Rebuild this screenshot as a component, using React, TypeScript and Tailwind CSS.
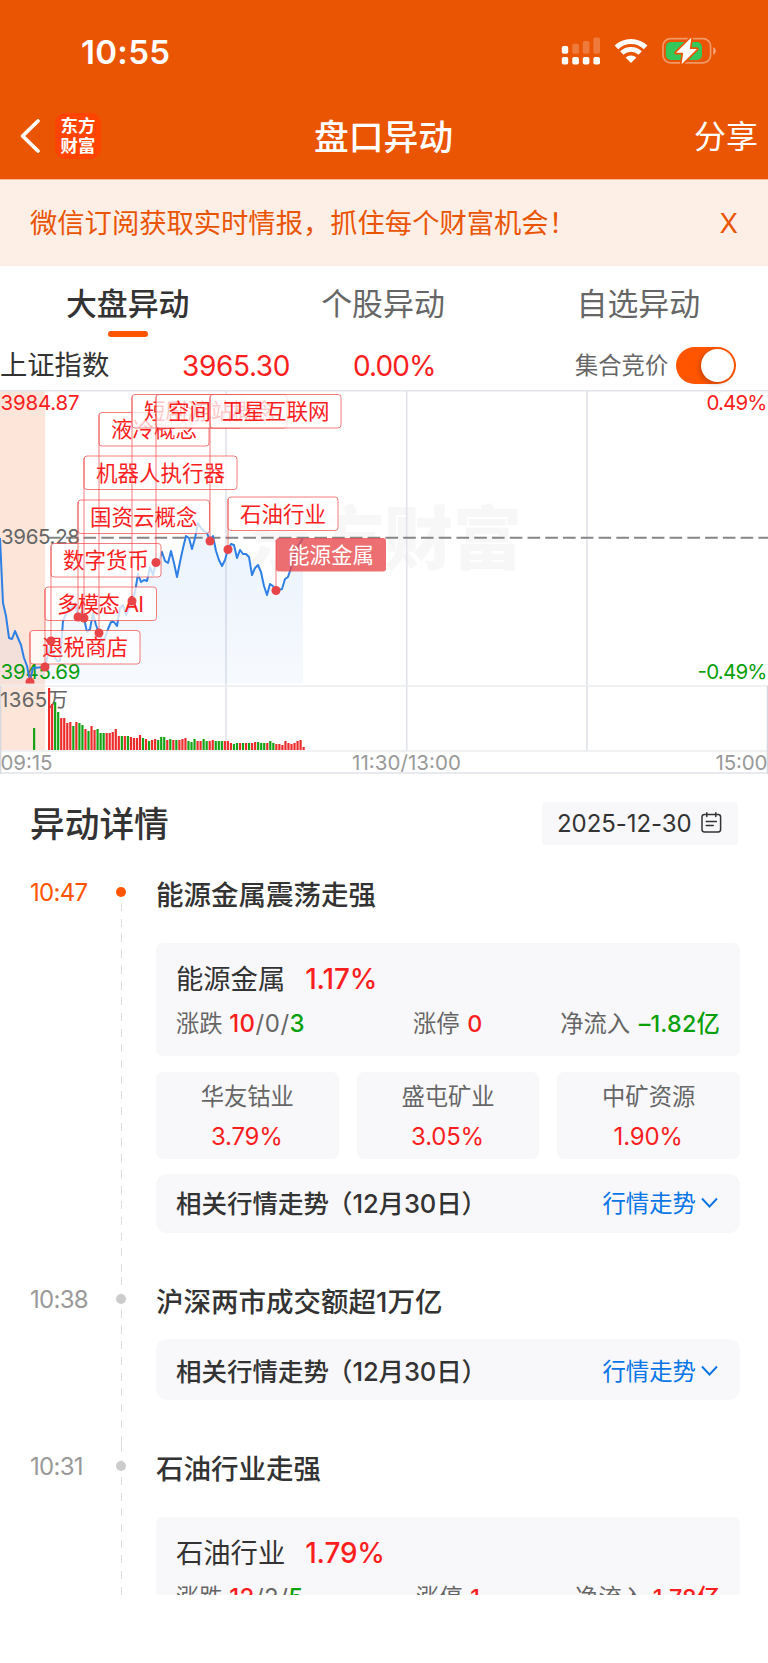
import { Fragment } from 'react';

const CHART_TOP = 390;

// minute line of the index, x/y in chart pixels
const pricePoints: [number, number][] = [
  [0, 538], [3, 603], [6, 616], [9, 638], [12, 639], [15, 631], [18, 638], [21, 645], [24, 658], [27, 666],
  [30, 681], [33, 668], [45, 667], [48, 655], [51, 641], [54, 656], [57, 661], [60, 661], [63, 621], [66, 614],
  [69, 609], [72, 607], [75, 603], [78, 617], [81, 612], [84, 618], [87, 632], [90, 629], [93, 613], [96, 625],
  [99, 633], [102, 641], [105, 638], [108, 629], [111, 622], [114, 622], [117, 626], [120, 608], [123, 605], [126, 615],
  [129, 608], [132, 601], [135, 592], [138, 574], [141, 582], [144, 580], [147, 581], [150, 567], [153, 575], [156, 562],
  [159, 560], [162, 552], [165, 561], [168, 563], [171, 551], [174, 563], [177, 577], [180, 562], [183, 548], [186, 536],
  [189, 538], [192, 549], [195, 538], [198, 523], [201, 528], [204, 531], [207, 533], [210, 541], [213, 536], [216, 551],
  [219, 560], [222, 566], [225, 560], [228, 549], [231, 544], [234, 545], [237, 558], [240, 550], [243, 554], [246, 554],
  [249, 557], [252, 575], [255, 568], [258, 565], [261, 572], [264, 586], [267, 595], [270, 584], [273, 586], [276, 590],
  [279, 590], [282, 589], [285, 579], [288, 577], [291, 568], [294, 555], [297, 547], [300, 543], [303, 538],
];

const volumes =
  'r62 r46 g48 g38 r32 r32 r27 r28 g24 r28 g27 g25 r21 g19 r24 r20 g21 g17 g17 r17 r17 r18 r21 r14 g14 r14 g14 r13 r12 r12 r15 g12 r11 g9 r10 r11 g10 g13 g13 r10 g11 r10 g10 r10 r11 r12 g9 g8 g11 r9 r9 g11 g9 r9 r10 g9 g9 g9 r9 r9 r7 g6 g7 r7 g7 r7 g7 r7 r8 g8 g7 g7 r7 g9 g7 r6 r6 r5 r9 r7 r6 r7 r9 r10 r3'
    .split(' ')
    .map((v) => ({ up: v[0] === 'r', h: Number(v.slice(1)) }));

const labels = [
  { text: '液冷概念', x: 99, y: 412.5, w: 110, dotY: 633 },
  { text: '短剧游戏', x: 132, y: 394.5, w: 110, dotY: 601 },
  { text: '空间站概念', x: 156, y: 394.5, w: 131, dotY: 562.5 },
  { text: '卫星互联网', x: 210, y: 394.5, w: 131, dotY: 541 },
  { text: '机器人执行器', x: 84, y: 456, w: 153, dotY: 618 },
  { text: '国资云概念', x: 78, y: 500, w: 131.5, dotY: 617 },
  { text: '数字货币', x: 51, y: 543.5, w: 110, dotY: 641 },
  { text: '多模态 AI', x: 45, y: 587, w: 111.5, dotY: 667, textW: 87 },
  { text: '退税商店', x: 30, y: 630.5, w: 110, dotY: 682 },
  { text: '石油行业', x: 228, y: 497, w: 110, dotY: 549.5 },
  { text: '能源金属', x: 276, y: 538, w: 110, dotY: 590.5, active: true },
];

function StatusIcons() {
  return (
    <svg className="absolute left-[560px] top-[34px]" width="158" height="34" viewBox="560 34 158 34" fill="none">
      <g fill="#fff">
        <rect x="561.8" y="46" width="6.4" height="7.8" rx="1.8" />
        <rect x="561.8" y="57" width="6.4" height="7.6" rx="1.8" />
        <rect x="572.3" y="57" width="6.6" height="7.6" rx="1.8" />
        <rect x="582.8" y="57" width="6.6" height="7.6" rx="1.8" />
        <rect x="593.4" y="57" width="6.6" height="7.6" rx="1.8" />
      </g>
      <g fill="#fff" opacity="0.22">
        <rect x="572.3" y="43.8" width="6.6" height="10" rx="1.8" />
        <rect x="582.8" y="41" width="6.6" height="12.8" rx="1.8" />
        <rect x="593.4" y="37.6" width="6.6" height="16.2" rx="1.8" />
      </g>
      <g stroke="#fff">
        <path d="M616.4 47.4 A21 21 0 0 1 645.6 47.4" strokeWidth="5.2" />
        <path d="M621.8 53 A13.4 13.4 0 0 1 640.2 53" strokeWidth="4.8" />
      </g>
      <path d="M631 63 L625.6 57.6 A7.8 7.8 0 0 1 636.4 57.6 Z" fill="#fff" />
      <rect x="663" y="38.7" width="47.6" height="24.2" rx="7.6" stroke="#fff" strokeOpacity="0.4" strokeWidth="1.7" />
      <path d="M713.2 47 Q716 48.4 716 51 Q716 53.6 713.2 55 Z" fill="#fff" fillOpacity="0.45" />
      <rect x="665.8" y="42" width="36.2" height="18" rx="5" fill="#34C759" />
      <path
        d="M691.4 37.6 L676 52.8 H683.2 L681.6 64.2 L697 49 H689.8 Z"
        fill="#fff"
        stroke="#EA5504"
        strokeWidth="3.4"
        paintOrder="stroke"
        strokeLinejoin="round"
      />
    </svg>
  );
}

function Header() {
  return (
    <header className="relative h-[179px] bg-[#EA5504] text-white">
      <div className="flex h-[94px] items-center pl-[81px] pt-[10px]">
        <span className="text-[33px] font-semibold leading-none tracking-[0.3px]">10:55</span>
        <StatusIcons />
      </div>
      <div className="flex h-[85px] items-center justify-between pl-[19px] pr-[10px]">
        <div className="flex w-[110px] items-center">
          <svg className="-mt-[1px] shrink-0" width="22" height="36" viewBox="0 0 22 36" fill="none" stroke="#fff" strokeWidth="3.8" strokeLinecap="round" strokeLinejoin="round">
            <path d="M19 3 L3.6 18 L19 33" />
          </svg>
          <div className="-mt-[2px] ml-[14px] flex h-[46px] w-[46px] shrink-0 flex-col items-center justify-center rounded-[10px] bg-[#FF4402] text-[17.4px] font-bold leading-[19.5px]">
            <span>东方</span>
            <span>财富</span>
          </div>
        </div>
        <h1 className="pt-px text-[34.8px] font-medium leading-none">盘口异动</h1>
        <span className="w-[120px] text-right text-[32px] leading-none">分享</span>
      </div>
    </header>
  );
}

function Chart() {
  const y = (v: number) => v - CHART_TOP;
  const line = pricePoints.map(([px, py]) => `${px},${y(py)}`).join(' ');

  return (
    <svg className="block" width="768" height="384" viewBox="0 0 768 384" fontSize="20.5">
      <defs>
        <linearGradient id="area" x1="0" y1="0" x2="0" y2="1">
          <stop offset="0" stopColor="#2f7fe6" stopOpacity="0.1" />
          <stop offset="1" stopColor="#2f7fe6" stopOpacity="0.04" />
        </linearGradient>
        <clipPath id="plot">
          <rect x="0" y="0" width="768" height="293.5" />
        </clipPath>
      </defs>

      <rect x="0" y="1" width="45" height="359" fill="#FDE5D9" />
      <text x="246" y={y(563.5)} fontSize="69" fontWeight="900" fill="#F7F7F7">东方财富</text>

      <g stroke="#E0E3EA" strokeWidth="1.6">
        <path d="M0 0.8 H768" />
        <path d="M226 1 V361 M406.7 1 V361 M587 1 V361" />
        <path d="M0 296 H768 M0 361 H768" stroke="#EBEDF0" />
        <path d="M0 383 H768" />
        <path d="M0.5 296 V384 M767.5 296 V384" stroke="#D5D8DE" />
      </g>

      <path d="M48 147.7 H768" stroke="#868686" strokeWidth="1.9" strokeDasharray="12.6 5.16" />

      <g fill="#666">
        <text x="1" y="154" textLength="79">3965.28</text>
        <text x="0" y="317" textLength="68">1365万</text>
      </g>
      <text x="0.5" y="19.5" fill="#FA1E1E" textLength="79">3984.87</text>
      <text x="0.5" y="288.5" fill="#09A009" textLength="80">3945.69</text>
      <text x="767.5" y="19.5" fill="#FA1E1E" textAnchor="end" textLength="61">0.49%</text>
      <text x="767.5" y="288.5" fill="#09A009" textAnchor="end" textLength="70">-0.49%</text>
      <g fill="#999">
        <text x="0.5" y="379.5" textLength="52">09:15</text>
        <text x="352" y="379.5" textLength="109">11:30/13:00</text>
        <text x="767.5" y="379.5" textAnchor="end" textLength="52">15:00</text>
      </g>

      <polygon points={`0,293.5 ${line} 303,293.5`} fill="url(#area)" />
      <polyline points={line} fill="none" stroke="#2F80E6" strokeWidth="2" strokeLinejoin="round" />

      <rect x="33" y="338" width="2.2" height="22" fill="#14A314" />
      {volumes.map((v, i) => (
        <rect key={i} x={48 + i * 3.03} y={360 - v.h} width="2.2" height={v.h} fill={v.up ? '#EE2B2B' : '#14A314'} />
      ))}

      {labels.map((l) => (
        <Fragment key={l.text}>
          <rect
            x={l.x}
            y={y(l.y)}
            width={l.w}
            height="33.5"
            rx="3"
            fill={l.active ? '#E94B4D' : '#fff'}
            fillOpacity={l.active ? 0.8 : 0.75}
            stroke="#EF4444"
            strokeOpacity={l.active ? 0 : 0.7}
            strokeWidth="1"
          />
          <text x={l.x + 12} y={y(l.y) + 24.8} fontSize="21.5" textLength={l.textW} fill={l.active ? '#fff' : '#FA1E1E'}>
            {l.text}
          </text>
        </Fragment>
      ))}
      <g clipPath="url(#plot)">
        {labels.map((l) => (
          <g key={l.text}>
            <path d={`M${l.x} ${y(l.y) + 2} V${y(l.dotY)}`} stroke="#EF4444" strokeOpacity="0.65" strokeWidth="1.1" />
            <circle cx={l.x} cy={y(l.dotY)} r="4.5" fill="#E84548" />
          </g>
        ))}
      </g>
    </svg>
  );
}

type Sector = {
  name: string;
  pct: string;
  up: string;
  flat: string;
  down: string;
  limit: string;
  inflow: string;
  inflowUp: boolean;
};

function SectorCard({ s }: { s: Sector }) {
  return (
    <div className="h-[113px] rounded-[7px] bg-[#F8F8FB] px-[20px] pt-[18px]">
      <div className="flex h-[38px] items-center text-[27.3px] leading-none text-[#333]">
        {s.name}
        <span className="ml-[20px] text-[27.8px] font-medium tracking-[-0.1px] text-[#FA1E1E]">{s.pct}</span>
      </div>
      <div className="mt-[7px] flex h-[36px] items-center justify-between text-[23.3px] leading-none text-[#666]">
        <span>
          涨跌{' '}
          <span className="text-[24px] tracking-[0.5px]">
            <b className="font-medium text-[#FA1E1E]">{s.up}</b>/{s.flat}/<b className="font-medium text-[#09A009]">{s.down}</b>
          </span>
        </span>
        <span className={s.inflowUp ? 'pl-[17px]' : 'pl-[30px]'}>
          涨停 <b className="ml-px font-medium text-[#FA1E1E]">{s.limit}</b>
        </span>
        <span>
          净流入{' '}
          <b className={s.inflowUp ? 'ml-px font-medium text-[#FA1E1E]' : 'ml-[2px] font-medium tracking-[0.2px] text-[#09A009]'}>{s.inflow}</b>
        </span>
      </div>
    </div>
  );
}

function TrendBar({ className }: { className: string }) {
  return (
    <div className={`flex items-center justify-between rounded-[11px] bg-[#F8F8FB] pl-[20px] pr-[22px] leading-none ${className}`}>
      <span className="text-[25.5px] font-medium text-[#333]">
        相关行情走势<span className="-ml-[2px] tracking-[-0.1px]">（12月30日）</span>
      </span>
      <span className="flex items-center text-[23.4px] text-[#0A75E6]">
        行情走势
        <svg className="-mt-[2px] ml-[5px]" width="17" height="12" viewBox="0 0 17 12" fill="none" stroke="currentColor" strokeWidth="1.9">
          <path d="M1 1.5 L8.5 9.5 L16 1.5" />
        </svg>
      </span>
    </div>
  );
}

function TimelineRow({ time, title, active, children, className }: {
  time: string;
  title: string;
  active?: boolean;
  children: React.ReactNode;
  className: string;
}) {
  return (
    <section className={`flex pr-[28px] ${className}`}>
      <div className={active ? 'flex h-[44px] w-[86px] items-center pl-[30px] text-[#FF5500]' : 'flex h-[44px] w-[86px] items-center pl-[30px] text-[#999]'}>
        <time className="pt-px text-[24px] leading-none tracking-[-0.7px]">{time}</time>
      </div>
      <div className="flex w-[70px] flex-col items-center">
        <div className={active ? 'h-[17px] w-px' : 'h-[17px] w-px bg-[repeating-linear-gradient(180deg,#dcdcdc_0_8px,transparent_8px_15.7px)]'} />
        <div className={active ? 'h-[10px] w-[10px] shrink-0 rounded-full bg-[#FF5500]' : 'h-[10px] w-[10px] shrink-0 rounded-full bg-[#CCC]'} />
        <div className="mt-[6px] w-px flex-1 bg-[repeating-linear-gradient(180deg,#dcdcdc_0_8px,transparent_8px_15.7px)]" />
      </div>
      <div className="flex-1">
        <h3 className="flex h-[48px] items-center pt-[3px] text-[27.5px] font-medium leading-none text-[#333]">{title}</h3>
        {children}
      </div>
    </section>
  );
}

const stocks = [
  { name: '华友钴业', pct: '3.79%' },
  { name: '盛屯矿业', pct: '3.05%' },
  { name: '中矿资源', pct: '1.90%' },
];

export default function App() {
  return (
    <div className="h-[1663px] w-[768px] overflow-hidden bg-white font-['Inter','Noto_Sans_CJK_SC',sans-serif]">
      <Header />

      <div className="flex h-[87px] items-center justify-between border-t border-[#F7B894] bg-[#FDEEE6] pl-[30px] pr-[30px] pt-px text-[27.3px] leading-none text-[#EA5504]">
        <span>微信订阅获取实时情报，抓住每个财富机会！</span>
        <span className="text-[27px]">X</span>
      </div>

      <nav className="flex h-[74px] pr-[2px] text-[30.9px] leading-none text-[#666]">
        <div className="relative flex flex-1 items-center justify-center pt-[3px] font-medium text-[#333]">
          大盘异动
          <i className="absolute bottom-[3px] left-[108px] h-[6px] w-[40px] rounded-full bg-[#FF5500]" />
        </div>
        <div className="flex flex-1 items-center justify-center pt-[3px]">个股异动</div>
        <div className="flex flex-1 items-center justify-center pt-[3px]">自选异动</div>
      </nav>

      <div className="flex h-[50px] items-center pt-px leading-none">
        <span className="w-[182px] pt-px text-[27.3px] text-[#333]">上证指数</span>
        <span className="w-[171px] text-[28px] tracking-[-0.35px] text-[#FA1E1E]">3965.30</span>
        <span className="w-[222px] text-[28px] tracking-[-0.9px] text-[#FA1E1E]">0.00%</span>
        <span className="pt-px text-[23.3px] text-[#666]">集合竞价</span>
        <span className="ml-[7.5px] flex h-[37px] w-[60px] items-center justify-end rounded-full bg-[#FF5500] pr-[2px]">
          <span className="h-[33px] w-[33px] rounded-full bg-white shadow-[-2px_2px_5px_rgba(0,0,0,0.2)]" />
        </span>
      </div>

      <Chart />

      <main className="h-[820.6px] overflow-hidden">
        <div className="flex h-[96px] items-center justify-between pl-[30px] pr-[30px]">
          <h2 className="pt-[5px] text-[34.7px] font-medium leading-none text-[#333]">异动详情</h2>
          <div className="mt-[2px] flex h-[43px] w-[196px] items-center rounded-[4px] bg-[#F8F8FB] pl-[15px] text-[#333]">
            <span className="w-[144px] pt-px text-[24px] leading-none tracking-[-0.05px]">2025-12-30</span>
            <svg width="21" height="22" viewBox="0 0 21 22" fill="none" stroke="currentColor" strokeWidth="1.5" strokeLinecap="round">
              <rect x="1" y="2.6" width="18.6" height="17.4" rx="2.4" />
              <path d="M5.8 0.8 V4.6 M14.8 0.8 V4.6 M5.2 9.6 H15.4 M5.2 13.6 H12.2" />
            </svg>
          </div>
        </div>

        <TimelineRow time="10:47" title="能源金属震荡走强" active className="h-[407px]">
          <div className="mt-[25px]">
            <SectorCard s={{ name: '能源金属', pct: '1.17%', up: '10', flat: '0', down: '3', limit: '0', inflow: '–1.82亿', inflowUp: false }} />
          </div>
          <div className="mt-[16px] grid grid-cols-3 gap-[18px]">
            {stocks.map((s) => (
              <div key={s.name} className="flex h-[87px] flex-col items-center rounded-[7px] bg-[#F8F8FB] pt-[12px] text-[23.3px] leading-none">
                <span className="flex h-[26px] items-center text-[#666]">{s.name}</span>
                <span className="mt-[14px] flex h-[26px] items-center pr-px text-[24px] tracking-[-0.2px] text-[#FA1E1E]">{s.pct}</span>
              </div>
            ))}
          </div>
          <TrendBar className="mt-[15px] h-[58.5px] pt-px" />
        </TimelineRow>

        <TimelineRow time="10:38" title="沪深两市成交额超1万亿" className="h-[167px]">
          <TrendBar className="mt-[14px] h-[61px] pt-[4px]" />
        </TimelineRow>

        <TimelineRow time="10:31" title="石油行业走强" className="h-[300px]">
          <div className="mt-[25px]">
            <SectorCard s={{ name: '石油行业', pct: '1.79%', up: '12', flat: '2', down: '5', limit: '1', inflow: '1.78亿', inflowUp: true }} />
          </div>
        </TimelineRow>
      </main>
    </div>
  );
}
